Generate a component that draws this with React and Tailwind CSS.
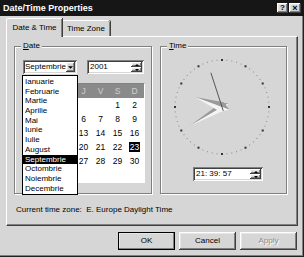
import React from "react";

const months = [
  "Ianuarie", "Februarie", "Martie", "Aprilie", "Mai", "Iunie",
  "Iulie", "August", "Septembrie", "Octombrie", "Noiembrie", "Decembrie",
];
const dayNames = ["L", "M", "M", "J", "V", "S", "D"];
// Septembrie 2001 starts on a Saturday (week begins Monday)
const days = [...Array(5).fill(null), ...Array.from({ length: 30 }, (_, i) => i + 1)];

const raised =
  "shadow-[inset_-1px_-1px_#404040,inset_1px_1px_#ffffff,inset_-2px_-2px_#808080,inset_2px_2px_#e6e6e6]";
const sunken =
  "shadow-[inset_1px_1px_#808080,inset_-1px_-1px_#ffffff,inset_2px_2px_#404040,inset_-2px_-2px_#d6d6d6]";
const etched = "border border-[#808080] shadow-[1px_1px_#ffffff,inset_1px_1px_#ffffff]";

const Arrow = ({ up, size = 5 }) => (
  <svg width={size} height={Math.ceil(size / 2)} viewBox="0 0 6 3">
    <polygon points={up ? "0,3 6,3 3,0" : "0,0 6,0 3,3"} fill="#000" />
  </svg>
);

const Spin = () => (
  <div className="flex flex-col w-[11px] h-full">
    <div className={`flex-1 bg-[#d6d6d6] flex items-center justify-center ${raised}`}>
      <Arrow up size={4} />
    </div>
    <div className={`flex-1 bg-[#d6d6d6] flex items-center justify-center ${raised}`}>
      <Arrow size={4} />
    </div>
  </div>
);

const Clock = () => {
  const cx = 50, cy = 50, r = 47;
  const marks = Array.from({ length: 60 }, (_, i) => {
    const a = (i * 6 * Math.PI) / 180;
    const x = cx + r * Math.sin(a);
    const y = cy - r * Math.cos(a);
    return i % 5 === 0 ? (
      <rect key={i} x={x - 1} y={y - 1} width="2" height="2" fill="#333" />
    ) : (
      <rect key={i} x={x - 0.5} y={y - 0.5} width="1" height="1" fill="#8a8a8a" />
    );
  });

  const hand = (deg, len, tail, w) => {
    const a = (deg * Math.PI) / 180;
    const dx = Math.sin(a), dy = -Math.cos(a);
    const tip = `${cx + dx * len},${cy + dy * len}`;
    const back = `${cx - dx * tail},${cy - dy * tail}`;
    const left = `${cx - dy * w},${cy + dx * w}`;
    const right = `${cx + dy * w},${cy - dx * w}`;
    return (
      <g>
        <polygon points={`${tip} ${left} ${back}`} fill="#9a9a9a" />
        <polygon points={`${tip} ${right} ${back}`} fill="#f4f4f4" />
      </g>
    );
  };

  const s = (342 * Math.PI) / 180;
  return (
    <svg width="100" height="100" viewBox="0 0 100 100">
      {marks}
      {hand(239.7, 38, 8, 4)}
      {hand(290, 29, 8, 5)}
      <line
        x1={cx + Math.sin(s) * -4}
        y1={cy - Math.cos(s) * -4}
        x2={cx + Math.sin(s) * 36}
        y2={cy - Math.cos(s) * 36}
        stroke="#555"
        strokeWidth="1"
      />
    </svg>
  );
};

const Button = ({ children, def, disabled }) => (
  <div
    className={`w-[57px] h-[18px] flex items-center justify-center bg-[#d6d6d6] ${raised} ${
      def ? "outline outline-1 outline-black -outline-offset-1" : ""
    } ${disabled ? "text-[#8a8a8a] [text-shadow:1px_1px_0_#ffffff]" : ""}`}
  >
    {children}
  </div>
);

export default function App() {
  return (
    <div className="w-[304px] h-[257px] bg-[#d6d6d6] font-['Liberation_Sans',Arial,sans-serif] text-[8px] leading-[10px] text-black flex flex-col overflow-hidden shadow-[inset_-1px_-1px_#202020,inset_-2px_-2px_#808080]">
      {/* Title bar */}
      <div className="h-[16px] bg-[#161616] flex items-center pl-[3px] pr-[3px] gap-[1px]">
        <span className="flex-1 text-white font-bold text-[9px]">Date/Time Properties</span>
        <div className={`w-[11px] h-[10px] bg-[#d6d6d6] flex items-center justify-center font-bold text-[8px] ${raised}`}>?</div>
        <div className={`w-[12px] h-[10px] bg-[#d6d6d6] flex items-center justify-center font-bold text-[9px] ${raised}`}>×</div>
      </div>

      {/* Tabs */}
      <div className="h-[20px] flex items-end pl-[6px]">
        <div className="relative z-10 -mb-px h-[19px] w-[56px] bg-[#d6d6d6] border-t border-l border-white rounded-tl-[2px] shadow-[inset_-1px_0_#808080,1px_0_#404040] flex items-center justify-center">
          Date &amp; Time
        </div>
        <div className="h-[16px] w-[48px] bg-[#d6d6d6] border-t border-white rounded-t-[2px] shadow-[inset_-1px_0_#808080,1px_0_#404040] flex items-center justify-center">
          Time Zone
        </div>
      </div>

      {/* Tab panel */}
      <div className="mx-[6px] h-[190px] w-[292px] border-t border-l border-white border-r border-b border-r-[#404040] border-b-[#404040] shadow-[inset_-1px_-1px_#808080] pl-[7px] pt-[9px] flex flex-col">
        <div className="flex gap-[8px]">
          {/* Date group */}
          <div className={`relative w-[138px] h-[148px] ${etched} pl-[8px] pt-[13px]`}>
            <span className="absolute -top-[6px] left-[6px] px-[2px] bg-[#d6d6d6]">
              <span className="underline">D</span>ate
            </span>
            <div className="flex gap-[10px] h-[14px]">
              <div className={`w-[54px] bg-white flex items-center pl-[2px] pr-[2px] ${sunken}`}>
                <span className="flex-1">Septembrie</span>
                <div className={`w-[10px] h-[10px] bg-[#d6d6d6] flex items-center justify-center ${raised}`}>
                  <Arrow size={5} />
                </div>
              </div>
              <div className={`w-[57px] bg-white flex items-center pl-[3px] pr-[2px] ${sunken}`}>
                <span className="flex-1">2001</span>
                <div className="h-[10px]">
                  <Spin />
                </div>
              </div>
            </div>

            {/* Calendar (first three columns sit under the open month list) */}
            <div className="mt-[9px] w-[122px] h-[100px] bg-white border border-t-[#808080] border-l-[#808080] border-r-white border-b-white text-[8.5px]">
              <div className="grid grid-cols-[repeat(7,17px)] h-[14px] bg-[#8a8a8a] text-[#cfcfcf] items-center">
                {dayNames.map((d, i) => (
                  <span key={i} className={`text-center ${i < 3 ? "invisible" : ""}`}>{d}</span>
                ))}
              </div>
              <div className="grid grid-cols-[repeat(7,17px)] auto-rows-[14px] items-center">
                {days.map((d, i) => (
                  <span key={i} className={`text-center ${i % 7 < 3 ? "invisible" : ""}`}>
                    {d === 23 ? <span className="bg-black text-white px-[1px]">23</span> : d}
                  </span>
                ))}
              </div>
            </div>

            {/* Month dropdown list */}
            <div className="absolute left-[7px] top-[28px] w-[56px] bg-white border border-black py-[1px]">
              {months.map((m) => (
                <div
                  key={m}
                  className={`h-[9.7px] leading-[9.7px] pl-[2px] ${m === "Septembrie" ? "bg-black text-white" : ""}`}
                >
                  {m}
                </div>
              ))}
            </div>
          </div>

          {/* Time group */}
          <div className={`relative w-[127px] h-[148px] ${etched} pt-[10px]`}>
            <span className="absolute -top-[6px] left-[6px] px-[2px] bg-[#d6d6d6]">
              <span className="underline">T</span>ime
            </span>
            <div className="ml-[11px]">
              <Clock />
            </div>
            <div className={`mt-[10px] ml-[32px] w-[70px] h-[14px] bg-white flex items-center pl-[3px] pr-[2px] ${sunken}`}>
              <span className="flex-1">21: 39: 57</span>
              <div className="h-[10px]">
                <Spin />
              </div>
            </div>
          </div>
        </div>

        <div className="mt-[11px] pl-[2px]">Current time zone:&nbsp; E. Europe Daylight Time</div>
      </div>

      {/* Buttons */}
      <div className="mt-[6px] flex justify-end gap-[4px] pr-[7px]">
        <Button def>OK</Button>
        <Button>Cancel</Button>
        <Button disabled>Apply</Button>
      </div>
    </div>
  );
}
